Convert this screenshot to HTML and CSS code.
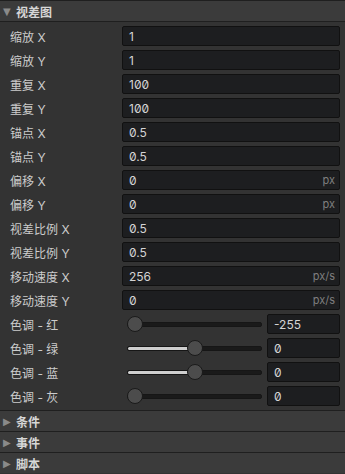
FILE: index.html
```html
<!DOCTYPE html>
<html>
<head>
<meta charset="utf-8">
<link rel="stylesheet" href="styles.css">
</head>
<body>
<div class="panel">
  <div class="sec-head open"><span class="tri">▼</span><span class="title">视差图</span></div>
  <div class="sec-body">
    <div class="row"><span class="label">缩放 X</span><div class="field"><span class="val">1</span></div></div>
    <div class="row"><span class="label">缩放 Y</span><div class="field"><span class="val">1</span></div></div>
    <div class="row"><span class="label">重复 X</span><div class="field"><span class="val">100</span></div></div>
    <div class="row"><span class="label">重复 Y</span><div class="field"><span class="val">100</span></div></div>
    <div class="row"><span class="label">锚点 X</span><div class="field"><span class="val">0.5</span></div></div>
    <div class="row"><span class="label">锚点 Y</span><div class="field"><span class="val">0.5</span></div></div>
    <div class="row"><span class="label">偏移 X</span><div class="field"><span class="val">0</span><span class="unit">px</span></div></div>
    <div class="row"><span class="label">偏移 Y</span><div class="field"><span class="val">0</span><span class="unit">px</span></div></div>
    <div class="row"><span class="label">视差比例 X</span><div class="field"><span class="val">0.5</span></div></div>
    <div class="row"><span class="label">视差比例 Y</span><div class="field"><span class="val">0.5</span></div></div>
    <div class="row"><span class="label">移动速度 X</span><div class="field"><span class="val">256</span><span class="unit">px/s</span></div></div>
    <div class="row"><span class="label">移动速度 Y</span><div class="field"><span class="val">0</span><span class="unit">px/s</span></div></div>
    <div class="row slider-row"><span class="label">色调 - 红</span>
      <div class="slider"><div class="track"><div class="fill" style="width:calc(7px + 0 * (100% - 14px))"></div><div class="thumb" style="left:calc(7px + 0 * (100% - 14px))"></div></div></div>
      <div class="field"><span class="val">-255</span></div></div>
    <div class="row slider-row"><span class="label">色调 - 绿</span>
      <div class="slider"><div class="track"><div class="fill" style="width:calc(7px + 0.5 * (100% - 14px))"></div><div class="thumb" style="left:calc(7px + 0.5 * (100% - 14px))"></div></div></div>
      <div class="field"><span class="val">0</span></div></div>
    <div class="row slider-row"><span class="label">色调 - 蓝</span>
      <div class="slider"><div class="track"><div class="fill" style="width:calc(7px + 0.5 * (100% - 14px))"></div><div class="thumb" style="left:calc(7px + 0.5 * (100% - 14px))"></div></div></div>
      <div class="field"><span class="val">0</span></div></div>
    <div class="row slider-row"><span class="label">色调 - 灰</span>
      <div class="slider"><div class="track"><div class="fill" style="width:calc(7px + 0 * (100% - 14px))"></div><div class="thumb" style="left:calc(7px + 0 * (100% - 14px))"></div></div></div>
      <div class="field"><span class="val">0</span></div></div>
  </div>
  <div class="sec-head"><span class="tri">▶</span><span class="title">条件</span></div>
  <div class="sec-head"><span class="tri">▶</span><span class="title">事件</span></div>
  <div class="sec-head"><span class="tri">▶</span><span class="title">脚本</span></div>
</div>
</body>
</html>
```

FILE: styles.css
```css
html, body {
  margin: 0;
  padding: 0;
  background: #333333;
}
body {
  font-family: Inter, "Noto Sans CJK SC", sans-serif;
  font-size: 12px;
  color: #cccccc;
}
.panel {
  width: 345px;
}
.sec-head {
  height: 20px;
  border-top: 1px solid #1f1f1f;
  background: #3b3b3b;
  display: flex;
  align-items: center;
  padding-left: 3px;
}
.sec-head.open {
  border-bottom: 1px solid #1f1f1f;
}
.tri {
  color: #8a8a8a;
  font-size: 10px;
  width: 13px;
  font-family: "DejaVu Sans", sans-serif;
}
.title {
  font-weight: bold;
  color: #d6d6d6;
  font-size: 12px;
  font-family: "Noto Sans CJK SC", sans-serif;
}
.sec-body {
  padding: 2px 0;
}
.row {
  height: 24px;
  display: grid;
  grid-template-columns: 112px 1fr;
  align-items: center;
  padding: 0 5px 0 10px;
}
.slider-row {
  grid-template-columns: 112px 1fr 73px;
  column-gap: 5px;
}
.label {
  font-family: Inter, "Noto Sans CJK SC", sans-serif;
  color: #cccccc;
  font-size: 12px;
}
.field {
  height: 18px;
  background: #1d1e20;
  border: 1px solid #111111;
  border-radius: 2px;
  display: flex;
  align-items: center;
  justify-content: space-between;
  padding: 0 4px 0 6px;
}
.val {
  color: #d4d4d4;
  font-family: Inter, sans-serif;
  font-feature-settings: "zero" 1;
  font-size: 12px;
}
.unit {
  color: #7f7f7f;
  font-family: Inter, sans-serif;
  font-size: 11px;
}
.slider {
  height: 20px;
  display: flex;
  align-items: center;
}
.track {
  position: relative;
  flex: 1;
  height: 3px;
  background: #1a1a1a;
  border: 1px solid #161616;
  border-radius: 2px;
}
.fill {
  height: 100%;
  background: #cfcfcf;
  border-radius: 2px;
}
.thumb {
  position: absolute;
  top: 50%;
  width: 14px;
  height: 14px;
  border-radius: 50%;
  background: #4c4c4c;
  border: 1px solid #1a1a1a;
  transform: translate(-50%, -50%);
}
```
